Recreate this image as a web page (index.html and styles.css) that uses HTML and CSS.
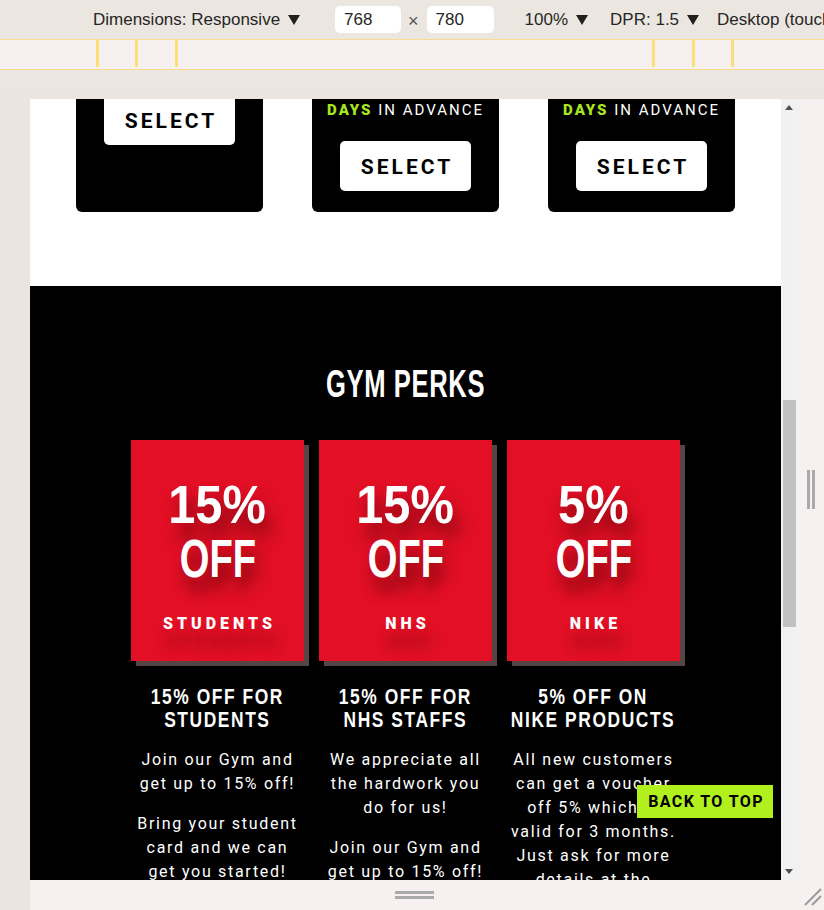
FILE: index.html
```html
<!DOCTYPE html>
<html lang="en">
<head>
<meta charset="utf-8">
<title>Gym Perks</title>
<link rel="stylesheet" href="styles.css">
</head>
<body>
<div class="devtools">
  <div class="toolbar">
    <span class="tb-item tb-dims">Dimensions: Responsive<svg class="caret" viewBox="0 0 12 10"><polygon points="0,0 12,0 6,10"/></svg></span>
    <span class="tb-input tb-w">768</span>
    <span class="tb-x">×</span>
    <span class="tb-input tb-h">780</span>
    <span class="tb-item tb-zoom">100%<svg class="caret" viewBox="0 0 12 10"><polygon points="0,0 12,0 6,10"/></svg></span>
    <span class="tb-item tb-dpr">DPR: 1.5<svg class="caret" viewBox="0 0 12 10"><polygon points="0,0 12,0 6,10"/></svg></span>
    <span class="tb-item tb-mode">Desktop (touch)</span>
  </div>
  <div class="ruler">
    <i class="mq mq-a"></i><i class="mq mq-b"></i><i class="mq mq-c"></i><i class="mq mq-d"></i><i class="mq mq-e"></i><i class="mq mq-f"></i>
  </div>
  <div class="spacer"></div>
  <div class="stage">
    <div class="gutter"></div>
    <div class="viewport">
      <div class="page">
        <section class="pricing">
          <div class="plan">
            <a class="select">SELECT</a>
          </div>
          <div class="plan">
            <p class="plan-days"><b>DAYS</b> IN ADVANCE</p>
            <a class="select">SELECT</a>
          </div>
          <div class="plan">
            <p class="plan-days"><b>DAYS</b> IN ADVANCE</p>
            <a class="select">SELECT</a>
          </div>
        </section>
        <section class="perks">
          <h2 class="perks-title"><span>GYM PERKS</span></h2>
          <div class="perk-grid">
            <div class="perk">
              <div class="perk-card">
                <div class="perk-big"><span class="pct">15%</span></div>
                <div class="perk-big"><span class="off">OFF</span></div>
                <div class="perk-tag">STUDENTS</div>
              </div>
              <h3 class="perk-head"><span>15% OFF FOR<br>STUDENTS</span></h3>
              <p>Join our Gym and<br>get up to 15% off!</p>
              <p>Bring your student<br>card and we can<br>get you started!</p>
            </div>
            <div class="perk">
              <div class="perk-card">
                <div class="perk-big"><span class="pct">15%</span></div>
                <div class="perk-big"><span class="off">OFF</span></div>
                <div class="perk-tag">NHS</div>
              </div>
              <h3 class="perk-head"><span>15% OFF FOR<br>NHS STAFFS</span></h3>
              <p>We appreciate all<br>the hardwork you<br>do for us!</p>
              <p>Join our Gym and<br>get up to 15% off!</p>
            </div>
            <div class="perk">
              <div class="perk-card">
                <div class="perk-big"><span class="pct">5%</span></div>
                <div class="perk-big"><span class="off">OFF</span></div>
                <div class="perk-tag">NIKE</div>
              </div>
              <h3 class="perk-head"><span>5% OFF ON<br>NIKE PRODUCTS</span></h3>
              <p>All new customers<br>can get a voucher<br>off 5% which is<br>valid for 3 months.<br>Just ask for more<br>details at the<br>front desk.</p>
            </div>
          </div>
        </section>
      </div>
      <div class="scrollbar">
        <div class="sb-btn"><svg viewBox="0 0 8 5"><polygon points="0,5 8,5 4,0"/></svg></div>
        <div class="sb-track"><div class="sb-thumb"></div></div>
        <div class="sb-btn sb-down"><svg viewBox="0 0 8 5"><polygon points="0,0 8,0 4,5"/></svg></div>
      </div>
      <a class="back-top">BACK TO TOP</a>
    </div>
    <div class="handle-right"><i></i><i></i></div>
  </div>
  <div class="bottom-row">
    <div class="gutter"></div>
    <div class="handle-bottom">
      <div class="grip-h"><i></i><i></i></div>
      <svg class="resize" viewBox="0 0 20 20"><line x1="3" y1="19" x2="19" y2="3"/><line x1="10" y1="19" x2="19" y2="10"/></svg>
    </div>
  </div>
</div>
</body>
</html>
```

FILE: styles.css
```css
html, body {
  margin: 0;
  padding: 0;
}
body {
  width: 824px;
  height: 910px;
  overflow: hidden;
  background: #ece6e1;
  font-family: "Liberation Sans", Arial, sans-serif;
}
.devtools {
  display: flex;
  flex-direction: column;
  width: 824px;
  height: 910px;
}

/* toolbar */
.toolbar {
  height: 39px;
  display: flex;
  align-items: center;
  padding-left: 93px;
  white-space: nowrap;
  overflow: hidden;
  font-size: 17px;
  color: #262626;
  background: #ece6e1;
  flex: none;
}
.toolbar > * {
  flex: none;
}
.tb-item {
  display: inline-flex;
  align-items: center;
}
.caret {
  width: 12px;
  height: 10px;
  margin-left: 8px;
  fill: #1f1f1f;
}
.tb-input {
  background: #fff;
  border-radius: 5px;
  height: 27px;
  line-height: 27px;
  padding-left: 9px;
  box-sizing: border-box;
}
.tb-w { width: 66px; margin-left: 35px; }
.tb-x { margin-left: 7px; color: #555; font-size: 18px; margin-top: 4px; }
.tb-h { width: 67px; margin-left: 8px; }
.tb-zoom { margin-left: 31px; }
.tb-dpr { margin-left: 22px; }
.tb-mode { margin-left: 18px; }

/* media query ruler */
.ruler {
  height: 29px;
  background: #f6f1f0;
  border-top: 1px solid #f5dc8e;
  border-bottom: 1px solid #f5dc8e;
  display: flex;
  align-items: flex-start;
  padding-left: 96px;
  flex: none;
}
.mq {
  display: block;
  width: 3px;
  height: 27px;
  background: #fbdf79;
  flex: none;
}
.mq-b { margin-left: 36px; }
.mq-c { margin-left: 37px; }
.mq-d { margin-left: 474px; }
.mq-e { margin-left: 37px; }
.mq-f { margin-left: 36px; }

.spacer {
  height: 29px;
  flex: none;
  background: linear-gradient(180deg, #ede7e2, #ebe5df);
}

/* stage */
.stage {
  display: flex;
  height: 781px;
  flex: none;
}
.gutter {
  width: 30px;
  flex: none;
  background: #ebe5e0;
}
.viewport {
  position: relative;
  width: 767px;
  height: 781px;
  overflow: hidden;
  display: flex;
  background: #fff;
  flex: none;
}
.handle-right {
  flex: 1;
  background: #f6f1f0;
  display: flex;
  justify-content: center;
  align-items: center;
  gap: 2px;
}
.handle-right i {
  display: block;
  width: 3px;
  height: 39px;
  background: #a9a9a9;
}
.bottom-row {
  display: flex;
  flex: 1;
}
.handle-bottom {
  flex: 1;
  background: #f6f1f0;
  position: relative;
  display: flex;
  justify-content: center;
  padding-top: 11px;
}
.grip-h {
  display: flex;
  flex-direction: column;
  gap: 2px;
  margin-left: -26px;
}
.grip-h i {
  display: block;
  width: 39px;
  height: 3px;
  background: #a9a9a9;
}
.resize {
  position: absolute;
  right: 2px;
  bottom: 4px;
  width: 20px;
  height: 20px;
  stroke: #9a9a9a;
  stroke-width: 2;
}

/* page */
.page {
  width: 751px;
  flex: none;
  font-family: Roboto, "Liberation Sans", sans-serif;
}
.pricing {
  display: flex;
  justify-content: center;
  gap: 49px;
  margin-top: -24px;
  padding-bottom: 74px;
  background: #fff;
}
.plan {
  width: 187px;
  background: #000;
  border-radius: 6px;
  padding: 20px 0 21px;
  display: flex;
  flex-direction: column;
  align-items: center;
}
.plan-days {
  margin: 3px 0 19px;
  font-size: 15px;
  line-height: 24px;
  letter-spacing: 2px;
  color: #fff;
  white-space: nowrap;
}
.plan-days b {
  color: #a8e61d;
  font-weight: 900;
}
.select {
  width: 131px;
  height: 50px;
  background: #fff;
  border-radius: 5px;
  display: flex;
  align-items: center;
  justify-content: center;
  font-size: 21px;
  font-weight: 700;
  letter-spacing: 3px;
  color: #000;
  padding: 2px 0 0 3px;
  box-sizing: border-box;
}

.perks {
  background: #000;
  color: #fff;
  padding: 73px 0 60px;
}
.perks-title {
  margin: 0;
  text-align: center;
  font-family: "Liberation Sans", Arial, sans-serif;
  font-size: 39px;
  line-height: 50px;
  font-weight: 700;
  letter-spacing: 1px;
}
.perks-title span {
  display: inline-block;
  transform: scaleX(0.655);
}
.perk-grid {
  display: flex;
  justify-content: center;
  gap: 15px;
  margin-top: 31px;
}
.perk {
  width: 173px;
  text-align: center;
}
.perk-card {
  height: 221px;
  box-sizing: border-box;
  background: #e20f25;
  box-shadow: 5px 5px 0 #554545;
  padding-top: 38px;
}
.perk-big {
  font-family: "Liberation Sans", Arial, sans-serif;
  font-weight: 700;
  font-size: 53px;
  line-height: 54px;
  text-shadow: 6px 14px 16px rgba(70, 0, 0, 0.6);
}
.perk-big span {
  display: inline-block;
}
.perk-big .pct {
  transform: scaleX(0.92);
}
.perk-big .off {
  transform: scaleX(0.72);
}
.perk-tag {
  margin-top: 28px;
  font-size: 16px;
  line-height: 20px;
  font-weight: 900;
  letter-spacing: 4px;
  padding-left: 4px;
  text-shadow: 4px 18px 14px rgba(70, 0, 0, 0.45);
}
.perk-head {
  margin: 24px 0 0;
  display: flex;
  justify-content: center;
  font-family: "Liberation Sans", Arial, sans-serif;
  font-size: 22px;
  line-height: 23px;
  font-weight: 700;
  letter-spacing: 2px;
}
.perk-head span {
  display: inline-block;
  white-space: nowrap;
  text-align: center;
  flex: none;
  transform: scaleX(0.79);
}
.perk p {
  margin: 16px 0 0;
  font-size: 16px;
  line-height: 24px;
  letter-spacing: 1.7px;
}
.perk-head + p {
  margin-top: 17px;
}

/* scrollbar */
.scrollbar {
  width: 16px;
  flex: none;
  background: #f1f1f1;
  display: flex;
  flex-direction: column;
}
.sb-btn {
  height: 17px;
  display: flex;
  align-items: center;
  justify-content: center;
  flex: none;
}
.sb-btn svg {
  width: 8px;
  height: 5px;
  fill: #505050;
}
.sb-track {
  flex: 1;
  padding: 284px 1px 0 2px;
}
.sb-thumb {
  height: 227px;
  background: #c1c1c1;
}

.back-top {
  position: absolute;
  right: 24px;
  bottom: 62px;
  height: 33px;
  line-height: 34px;
  padding: 0 9px 0 11px;
  background: #b1f01d;
  color: #000;
  font-family: Roboto, "Liberation Sans", sans-serif;
  font-size: 16px;
  font-weight: 700;
  letter-spacing: 1.4px;
}
```
